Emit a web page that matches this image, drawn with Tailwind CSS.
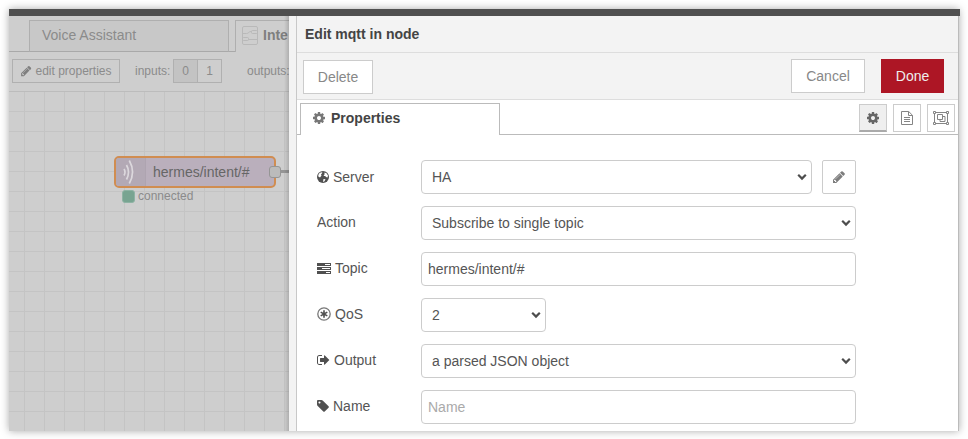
<!DOCTYPE html>
<html lang="en">
<head>
<meta charset="utf-8">
<title>Edit mqtt in node</title>
<script src="https://cdn.jsdelivr.net/npm/@tailwindcss/browser@4"></script>
</head>
<body class="bg-white h-[439px] overflow-hidden p-[9px] font-['Liberation_Sans',Arial,sans-serif] text-[14px] leading-5 text-[#555]">
<svg class="hidden">
  <symbol id="pencil" viewBox="0 0 1536 1792"><path d="M363 1536l91-91-235-235-91 91v107h128v128h107zM886 608q0-22-22-22-10 0-17 7l-542 542q-7 7-7 17 0 22 22 22 10 0 17-7l542-542q7-7 7-17zM832 416l416 416-832 832h-416v-416zM1515 512q0 53-37 90l-166 166-416-416 166-165q36-38 90-38 53 0 91 38l235 234q37 39 37 91z"/></symbol>
  <symbol id="cog" viewBox="0 0 1536 1792"><path d="M1024 896q0-106-75-181t-181-75-181 75-75 181 75 181 181 75 181-75 75-181zm512-109v222q0 12-8 23t-20 13l-185 28q-19 54-39 91 35 50 107 138 10 12 10 25t-9 23q-27 37-99 108t-94 71q-12 0-26-9l-138-108q-44 23-91 38-16 136-29 186-7 28-36 28h-222q-14 0-24.500-8.500t-11.500-21.500l-28-184q-49-16-90-37l-141 107q-10 9-25 9-14 0-25-11-126-114-165-168-7-10-7-23 0-12 8-23 15-21 51-66.500t54-70.500q-27-50-41-99l-183-27q-13-2-21-12.500t-8-23.500v-222q0-12 8-23t19-13l186-28q14-46 39-92-40-57-107-138-10-12-10-24 0-10 9-23 26-36 98.500-107.500t94.500-71.500q13 0 26 10l138 107q44-23 91-38 16-136 29-186 7-28 36-28h222q14 0 24.500 8.500t11.500 21.500l28 184q49 16 90 37l142-107q9-9 24-9 13 0 25 10 129 119 165 170 7 8 7 22 0 12-8 23-15 21-51 66.500t-54 70.500q26 50 41 98l183 28q13 2 21 12.500t8 23.500z"/></symbol>
  <symbol id="chev" viewBox="0 0 10 8"><path d="M1.200 1.800 5 5.600 8.800 1.800" fill="none" stroke="#4d4d4d" stroke-width="2.200"/></symbol>
</svg>
<div class="w-[950px] h-[422px] flex flex-col shadow-[0px_0px_8px_0px_rgba(0,0,0,0.34)]">
  <div class="h-[7px] w-[951px] shrink-0 bg-[#505050]"></div>
  <div class="flex flex-1 min-h-0">
    <!-- workspace -->
    <div class="relative w-[280px] shrink-0 overflow-hidden bg-[#cecece] flex flex-col text-[#8b8b8b]">
      <div class="flex h-9 items-end whitespace-nowrap">
        <div class="w-5 shrink-0 h-full border-b border-[#a9a9a9]"></div>
        <div class="w-[200px] shrink-0 h-8 border border-[#afafaf] border-b-[#a9a9a9] bg-[#c8c8c8] pl-3 leading-[29px]">Voice Assistant</div>
        <div class="w-[6px] shrink-0 h-full border-b border-[#a9a9a9]"></div>
        <div class="w-[54px] shrink-0 h-8 border-l border-t border-[#afafaf] flex items-center pl-[6px] gap-[5px] font-bold text-[#7f7f7f]">
          <svg class="w-4 h-5 mb-[3px] shrink-0" viewBox="0 0 16 20" fill="none" stroke="#b9b9b9"><rect x=".5" y="1.500" width="15" height="18" rx="1.500"/><rect x="9.500" y="5.500" width="6" height="3" rx="1"/><rect x=".5" y="12.500" width="6" height="3" rx="1"/><path d="M.5 8.500h4q1.500 0 2.200-1t2.800-1M6.500 14.500h9"/></svg>
          <span class="mb-[3px]">Inte</span>
        </div>
      </div>
      <div class="flex items-center h-10 pl-[3px] border-b border-[#bcbcbc] text-[12px] pb-[2px] whitespace-nowrap">
        <div class="w-[108px] shrink-0 h-6 border border-[#b0b0b0] flex items-center pl-2 gap-[4px]"><svg class="w-[10.500px] h-3" fill="#7f7f7f"><use href="#pencil"/></svg>edit properties</div>
        <span class="ml-[15px] w-[38px] shrink-0">inputs:</span>
        <div class="w-[49px] shrink-0 h-6 border border-[#b0b0b0] flex text-center leading-[22px]"><span class="w-6 bg-[#c3c3c3] border-r border-[#b0b0b0]">0</span><span class="flex-1">1</span></div>
        <span class="ml-[25px] shrink-0">outputs:</span>
      </div>
      <div class="relative flex-1 bg-[linear-gradient(to_right,#c4c4c4_1px,transparent_1px),linear-gradient(to_bottom,#c4c4c4_1px,transparent_1px)] bg-size-[20px_20px] bg-position-[15px_19px]">
        <div class="absolute left-[266px] top-[78px] w-[14px] h-[3px] bg-[#959595]"></div>
        <div class="absolute left-[105px] top-[64px] w-[162px] h-8 rounded-[5px] border-2 border-[#d08d51] bg-[#baafbc] flex items-center overflow-hidden text-[#666]">
          <div class="w-[30px] h-full bg-[#b3a9b5] border-r border-[#aea4b0] flex items-center justify-center">
            <svg class="w-[14px] h-[26px] -ml-[3px]" viewBox="0 0 14 26" fill="none" stroke="#dcd8dd" stroke-width="1.700"><path d="M2 10q2 3 0 6.500M4.500 6q4 7 0 14.500M7.300 1.500q6.500 11.500 0 23"/></svg>
          </div>
          <span class="ml-[7px]">hermes/intent/#</span>
        </div>
        <div class="absolute left-[260px] top-[74px] w-3 h-3 rounded-[3px] border border-[#959595] bg-[#bbb]"></div>
        <div class="absolute left-[113px] top-[97px] flex items-center gap-[3px] text-[12px] leading-[14px]"><span class="w-[13px] h-[13px] rounded-[3px] border border-[#8eb3a4] bg-[#78a491]"></span>connected</div>
      </div>
      <div class="absolute right-0 top-0 w-[5px] h-full bg-linear-to-r from-black/0 to-black/15"></div>
    </div>
    <!-- edit tray -->
    <div class="w-2 shrink-0 bg-[#f3f3f3] border-r border-[#c8c8c8]"></div>
    <div class="flex-1 bg-white border-r border-[#bbb] flex flex-col">
      <div class="h-[37px] bg-[#f3f3f3] border-b border-[#ddd] pl-2 leading-[36px] font-bold text-[#444]">Edit mqtt in node</div>
      <div class="h-[47px] bg-[#f3f3f3] border-b border-[#ddd] flex items-start pl-[6px] pr-[14px] pt-[6px] text-[#888] text-center leading-8">
        <div class="w-[70px] h-[34px] mt-px border border-[#ccc] bg-white">Delete</div>
        <div class="ml-auto w-[74px] h-[34px] border border-[#ccc] bg-white">Cancel</div>
        <div class="ml-4 w-[63px] h-[34px] bg-[#ad1625] text-[#eee] leading-[34px]">Done</div>
      </div>
      <div class="h-[35px] flex items-end">
        <div class="w-[3px] h-full border-b border-[#bbb]"></div>
        <div class="w-[200px] h-8 border border-b-0 border-[#bbb] flex items-center pl-3 gap-[6px] pb-[3px] font-bold text-[#444]"><svg class="w-3 h-[14px]" fill="#777"><use href="#cog"/></svg>Properties</div>
        <div class="flex-1 h-full border-b border-[#bbb] flex justify-end gap-[6px] pt-1 pr-[3px]">
          <div class="w-7 h-7 border border-[#ccc] border-b-2 border-b-[#aaa] bg-[#efefef] flex items-center justify-center"><svg class="w-3 h-[14px]" fill="#666"><use href="#cog"/></svg></div>
          <div class="w-7 h-7 border border-[#ccc] flex items-center justify-center"><svg class="w-3 h-[14px]" viewBox="0 0 12 14" fill="none" stroke="#858585"><path d="M.5.5h7.200l3.800 3.800v9.200H.500zM7.500.5v4h4M3 6.500h6M3 8.500h6M3 10.500h6"/></svg></div>
          <div class="w-7 h-7 border border-[#ccc] flex items-center justify-center"><svg class="w-4 h-[14px]" viewBox="0 0 16 14" fill="none" stroke="#858585"><path d="M2 1.500h12M2 12.500h12M1.500 2v10M14.500 2v10M4.500 3.500h5v5h-5zM9.500 5.500h2.500v5h-5v-2"/><path fill="white" d="M.5.5h2v2h-2zM13.500.5h2v2h-2zM.5 11.500h2v2h-2zM13.500 11.500h2v2h-2z"/></svg></div>
        </div>
      </div>
      <div class="flex flex-col gap-3 pl-5 pt-[25px]">
        <div class="flex h-[34px] leading-8"><div class="w-[104px] flex items-center gap-1 pb-px"><svg class="w-3 h-3" viewBox="0 0 12 12"><circle cx="6" cy="6" r="6" fill="#505050"/><path fill="#fff" d="M1.300 4 2.500 2 4.500 1.200l1 .6L4 3.500 4.500 4.500 3 6.500 1.300 5.500zM7.500 1.500l2 .8 1.500 2.200-.5 2-1.500-.5L8.200 5 6.500 5 7.500 3.500zM6.500 8l2 .3-1 2-1.500.7z"/></svg>Server</div>
          <div class="w-[391px] border border-[#ccc] rounded-[4px] pl-[10px] pr-[4px] flex items-center justify-between">HA<svg class="w-[10px] h-2"><use href="#chev"/></svg></div>
          <div class="ml-[10px] w-[34px] border border-[#ccc] rounded-[2px] flex items-center justify-center"><svg class="w-3 h-[14px]" fill="#7d7d7d"><use href="#pencil"/></svg></div></div>
        <div class="flex h-[34px] leading-8"><div class="w-[104px]">Action</div><div class="w-[435px] border border-[#ccc] rounded-[4px] pl-[10px] pr-[4px] flex items-center justify-between">Subscribe to single topic<svg class="w-[10px] h-2"><use href="#chev"/></svg></div></div>
        <div class="flex h-[34px] leading-8"><div class="w-[104px] flex items-center gap-1 pb-[2px]"><svg class="w-[14px] h-[11px]" viewBox="0 0 14 11"><path fill="#505050" d="M0 0h14v3H0zM0 4h14v3H0zM0 8h14v3H0z"/><path fill="#fff" d="M8 1h5v1H8zM5 5h8v1H5zM9 9h4v1H9z"/></svg>Topic</div><div class="w-[435px] border border-[#ccc] rounded-[4px] pl-[6px]">hermes/intent/#</div></div>
        <div class="flex h-[34px] leading-8"><div class="w-[104px] flex items-center gap-1 pb-[2px]"><svg class="w-[14px] h-[14px]" viewBox="0 0 14 14" fill="none" stroke="#777"><circle cx="7" cy="7" r="6.200" stroke-width="1.300"/><path stroke-width="1.600" stroke="#505050" d="M7 3.200v7.600M3.700 5.100l6.600 3.800M10.300 5.100 3.700 8.900"/></svg>QoS</div><div class="w-[125px] border border-[#ccc] rounded-[4px] pl-[10px] pr-[4px] flex items-center justify-between">2<svg class="w-[10px] h-2"><use href="#chev"/></svg></div></div>
        <div class="flex h-[34px] leading-8"><div class="w-[104px] flex items-center gap-1 pb-[2px]"><svg class="w-[13px] h-[14px]" viewBox="0 0 1664 1792" fill="#505050"><path d="M640 1440q0 4 1 20t.5 26.500-3 23.500-10 19.500-20.500 6.500h-320q-119 0-203.500-84.500t-84.500-203.500v-704q0-119 84.500-203.500t203.500-84.500h320q13 0 22.500 9.500t9.500 22.500q0 4 1 20t.5 26.500-3 23.500-10 19.500-20.500 6.500h-320q-66 0-113 47t-47 113v704q0 66 47 113t113 47h312l11.500 1 11.500 3 8 5.500 7 9 2 13.500zm928-544q0 26-19 45l-544 544q-19 19-45 19t-45-19-19-45v-288h-448q-26 0-45-19t-19-45v-384q0-26 19-45t45-19h448v-288q0-26 19-45t45-19 45 19l544 544q19 19 19 45z"/></svg>Output</div><div class="w-[435px] border border-[#ccc] rounded-[4px] pl-[10px] pr-[4px] flex items-center justify-between">a parsed JSON object<svg class="w-[10px] h-2"><use href="#chev"/></svg></div></div>
        <div class="flex h-[34px] leading-8"><div class="w-[104px] flex items-center gap-1 pb-[2px]"><svg class="w-3 h-[14px]" viewBox="0 0 1536 1792" fill="#505050"><path d="M448 448q0-53-37.500-90.500t-90.500-37.500-90.500 37.500-37.500 90.500 37.500 90.500 90.500 37.500 90.500-37.500 37.500-90.500zm1067 576q0 53-37 90l-491 492q-39 37-91 37-53 0-90-37l-715-716q-38-37-64.500-101t-26.500-117v-416q0-52 38-90t90-38h416q53 0 117 26.500t102 64.500l715 714q37 39 37 91z"/></svg>Name</div><div class="w-[435px] border border-[#ccc] rounded-[4px] pl-[6px] text-[#aaa]">Name</div></div>
      </div>
    </div>
  </div>
</div>
</body>
</html>
